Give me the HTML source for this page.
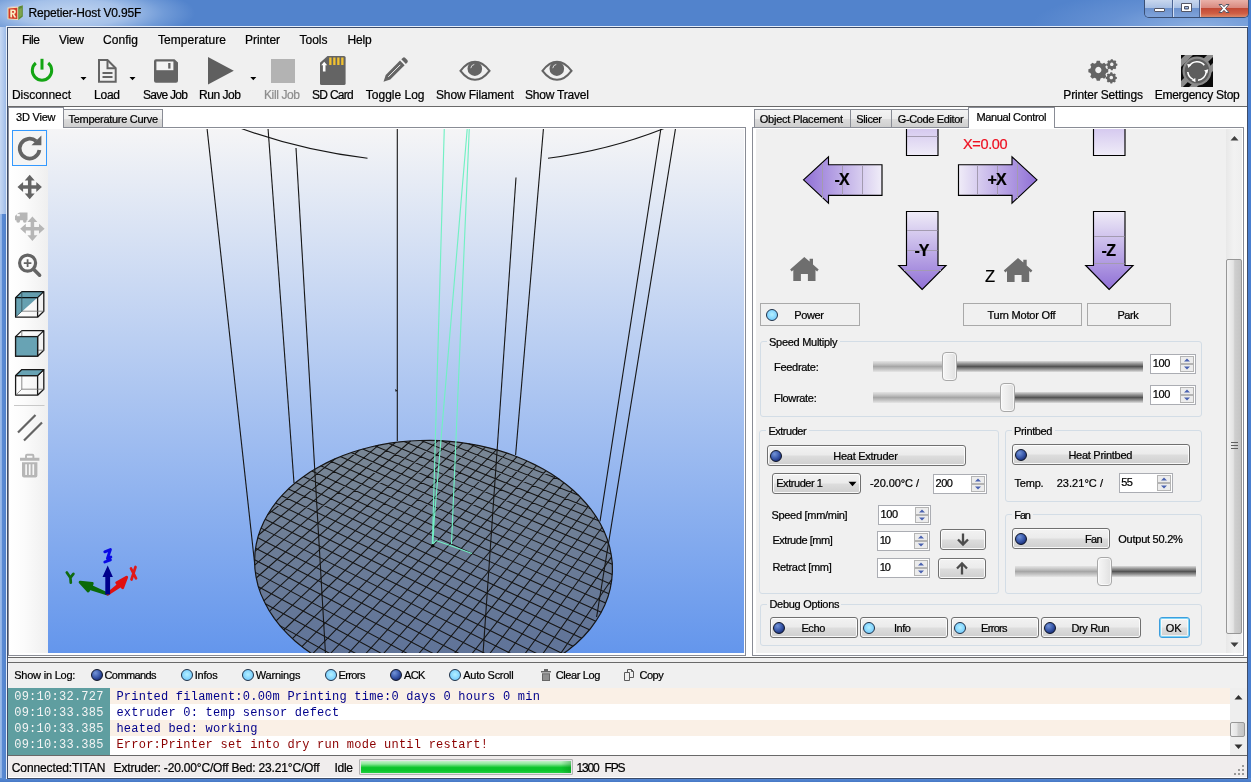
<!DOCTYPE html>
<html><head><meta charset="utf-8"><title>Repetier-Host V0.95F</title>
<style>
*{box-sizing:border-box;margin:0;padding:0}
html,body{width:1251px;height:782px;overflow:hidden}
body{position:relative;font-family:'Liberation Sans',sans-serif;font-size:11px;color:#000;background:#4f85cf}
.abs{position:absolute}
.t{position:absolute;white-space:pre;-webkit-text-stroke:.22px currentColor}
.m{-webkit-text-stroke:0}
svg{position:absolute;overflow:visible}

.btn{position:absolute;border:1px solid #707070;border-radius:3px;background:linear-gradient(#f2f2f2 0,#ebebeb 48%,#dddddd 52%,#cfcfcf 100%);box-shadow:inset 0 0 0 1px rgba(255,255,255,.85)}
.flat{position:absolute;border:1px solid #a9a9a9;background:#f0f0f0}
.grp{position:absolute;border:1px solid #d3dde6;border-radius:3px}
.num{position:absolute;border:1px solid #abadb3;background:#fff}
.led{position:absolute;width:12px;height:12px;border-radius:50%}
.ledd{background:radial-gradient(circle at 35% 30%,#7393d6 0,#3c5cae 45%,#1b2f78 80%);border:1.5px solid #0c1326}
.ledl{background:radial-gradient(circle at 50% 45%,#b4f0ff 0,#86d6ff 55%,#6cc0f6 100%);border:1.5px solid #1c3048}
.trk{position:absolute;height:11px}
.thumb{position:absolute;width:15px;height:29px;border:1px solid #a8a8a8;border-radius:4px;background:linear-gradient(90deg,#f6f6f6,#ececec 50%,#e0e0e0);box-shadow:inset 0 0 0 1px rgba(255,255,255,.7)}

</style></head><body>
<div class="abs" style="left:0px;top:0px;width:1251px;height:782px;background:#5283cc"></div><div class="abs" style="left:0px;top:0px;width:230px;height:27px;background:radial-gradient(ellipse 125px 30px at 70px 13px,rgba(205,222,245,.9) 0,rgba(185,208,240,.8) 45%,rgba(150,184,230,.45) 75%,rgba(82,131,204,0) 100%)"></div><div class="abs" style="left:1000px;top:0px;width:251px;height:27px;background:radial-gradient(ellipse 170px 40px at 200px 27px,rgba(160,190,232,.75) 0,rgba(130,166,222,.4) 55%,rgba(82,131,204,0) 100%)"></div><div class="abs" style="left:0px;top:27px;width:6px;height:190px;background:linear-gradient(90deg,#c6d8f3,#b4cbee 50%,#9dbbe8)"></div><div class="abs" style="left:0px;top:214px;width:6px;height:568px;background:linear-gradient(90deg,#9fbdea 0,#8fb2e6 25%,#5a8ad3 40%,#5283cc 100%)"></div><div class="abs" style="left:1248px;top:0px;width:3px;height:782px;background:#4a7fcf"></div><div class="abs" style="left:0px;top:778px;width:1251px;height:4px;background:linear-gradient(#5b8dd6,#4678c6)"></div><div class="abs" style="left:6px;top:26px;width:1242px;height:753px;background:#e6eefa"></div><div class="abs" style="left:7px;top:27px;width:1241px;height:752px;background:#3d4c69"></div><div class="abs" style="left:8px;top:28px;width:1239px;height:750px;background:#f0f0f0"></div><svg style="left:7px;top:5px" width="17" height="16" viewBox="0 0 17 16">
<path d="M0.500 2.600 L11.300 1.600 L11.300 15 L0.500 14.300 Z" fill="#f3e2b4"/>
<path d="M1.500 3.500 L10.300 2.700 L10.300 14 L1.500 13.400 Z" fill="#d23a26"/>
<path d="M11.300 1.600 L15.800 0.300 L15.800 11.600 L11.300 15 Z" fill="#5d8a32"/>
<path d="M12.200 4 L14.800 3 L14.800 10.500 L12.200 12.600 Z" fill="#8fae5a" opacity=".7"/>
<path d="M0.500 2.600 L4 1.300 L15.800 0.300 L11.300 1.600 Z" fill="#c9c2e0"/>
<path d="M3.300 12.300 V4.600 H6.600 Q8.900 4.600 8.900 6.800 Q8.900 8.500 7.200 8.900 L9.300 12.500 H7.200 L5.600 9.300 H5.100 V12.400 Z M5.100 7.800 H6.300 Q7.100 7.800 7.100 6.900 Q7.100 6.100 6.300 6.100 H5.100 Z" fill="#fbeec4"/>
</svg><div class="abs" style="left:1144px;top:0px;width:105px;height:18px;border:1px solid #3a4f74;border-top:none;border-radius:0 0 5px 5px;background:#6d93cf;overflow:hidden"><div class="abs" style="left:0;top:0;width:28px;height:17px;background:linear-gradient(#c8d7ee 0,#a9c0e4 45%,#6e93ce 50%,#7fa3da 100%);border-right:1px solid #4a6392"></div><div class="abs" style="left:28px;top:0;width:27px;height:17px;background:linear-gradient(#c8d7ee 0,#a9c0e4 45%,#6e93ce 50%,#7fa3da 100%);border-right:1px solid #4a6392;border-left:1px solid #d4e0f4"></div><div class="abs" style="left:55px;top:0;width:49px;height:17px;background:linear-gradient(#e9b1a9 0,#d98a80 45%,#c24a36 50%,#cf5f45 80%,#dc8a6a 100%);border-left:1px solid #e8c8c8"></div></div><svg style="left:1144px;top:0" width="105" height="19">
<rect x="10.5" y="8.5" width="10" height="3" rx="0.5" fill="#fff" stroke="#535666" stroke-width="1"/>
<path d="M37.500 3.500 h10 v8 h-10 z M40.500 6.500 v2.500 h4 v-2.500 z" fill="#fff" fill-rule="evenodd" stroke="#535666" stroke-width="1"/>
<path d="M75 4.500 h3 l2 2.200 l2 -2.200 h3 l-3.500 4 l3.500 4 h-3 l-2 -2.200 l-2 2.200 h-3 l3.500 -4 z" fill="#fff" stroke="#535666" stroke-width="1"/>
</svg><div class="abs" style="left:8px;top:106px;width:1239px;height:1px;background:#696969"></div><div class="abs" style="left:8px;top:107px;width:1239px;height:550px;background:#fff"></div><svg style="left:0;top:0" width="1251" height="110">
<!-- power -->
<path d="M35.800 63.000 A9.700 9.700 0 1 0 48.200 63.000" fill="none" stroke="#14a514" stroke-width="3"/>
<rect x="40.500" y="58.800" width="3" height="10.800" fill="#14a514"/>
<path d="M80.500 77 h6 l-3 3.300 z M129.500 77 h6 l-3 3.300 z M250.300 77 h6 l-3 3.300 z" fill="#000"/>
<!-- load -->
<path d="M99 60 h8.500 l8.200 8.200 v13.600 h-16.700 z" fill="none" stroke="#646464" stroke-width="2" stroke-linejoin="miter"/>
<path d="M107.500 60 v8.200 h8.200" fill="none" stroke="#646464" stroke-width="2"/>
<path d="M102.500 73 h10 M102.500 77 h10" stroke="#646464" stroke-width="1.800"/>
<!-- save -->
<path d="M156 59.300 h18.500 l3.500 3.200 v18.300 q0 2 -2 2 h-20 q-2 0 -2 -2 v-19.500 q0 -2 2 -2 z" fill="#646464"/>
<rect x="156.400" y="61.500" width="17" height="8.700" fill="#f4f4f4"/>
<rect x="168.200" y="63" width="2.300" height="5.600" fill="#646464"/>
<!-- run -->
<path d="M208 57 L233.800 70.800 L208 84.600 z" fill="#5f5f5f"/>
<!-- kill -->
<rect x="271" y="59" width="24" height="24" fill="#b3b3b3"/>
<!-- sd -->
<path d="M327.500 56 h16.500 q1.600 0 1.600 1.600 v25.800 q0 1.600 -1.600 1.600 h-22.400 q-1.600 0 -1.600 -1.600 v-20.600 z" fill="#646464"/>
<path d="M329.200 57.500 h2.300 v7.500 h-2.300 z M333.200 57.500 h2.300 v7.500 h-2.300 z M337.200 57.500 h2.300 v7.500 h-2.300 z M341.200 57.500 h2.300 v7.500 h-2.300 z" fill="#f2c230"/>
<path d="M324.200 61.700 l3 3.600 h-1.700 v6.300 h-2.600 v-6.300 h-1.700 z" fill="#fff"/>
<!-- pencil -->
<path d="M383.500 81.700 l2.200 -6.800 l14.300 -14.300 l4.600 4.600 l-14.300 14.300 z" fill="#646464"/>
<path d="M401.300 59.300 l1.400 -1.400 q1.300 -1.200 2.600 0 l2 2 q1.200 1.300 0 2.600 l-1.400 1.400 z" fill="#646464"/>
<path d="M388.300 76.800 l12 -12" stroke="#f0f0f0" stroke-width="1"/>
<!-- eyes -->
<g id="eye"><path d="M460.500 70.800 Q467.500 61.800 475 61.800 Q482.500 61.800 489.500 70.800 Q482.500 79.800 475 79.800 Q467.500 79.800 460.500 70.800 z" fill="none" stroke="#646464" stroke-width="2.100"/>
<circle cx="474.800" cy="68.700" r="7.300" fill="#646464"/><path d="M470.800 68.200 a4.200 4.200 0 0 1 3.500 -3.800" fill="none" stroke="#d8d8d8" stroke-width="1"/></g>
<use href="#eye" x="82"/>
<!-- gears -->
<g fill="#646464">
<path id="gear" d="M0 -10 l1.700 0 l.7 2.300 l1.900 .8 l2.100 -1.100 l2.400 2.400 l-1.100 2.100 l.8 1.900 l2.300 .7 v3.400 l-2.300 .7 l-.8 1.900 l1.100 2.100 l-2.400 2.400 l-2.100 -1.100 l-1.900 .8 l-.7 2.300 h-3.400 l-.7 -2.300 l-1.900 -.8 l-2.100 1.100 l-2.400 -2.400 l1.100 -2.100 l-.8 -1.900 l-2.300 -.7 v-3.400 l2.300 -.7 l.8 -1.900 l-1.100 -2.100 l2.400 -2.400 l2.100 1.100 l1.900 -.8 l.7 -2.300 z M0 -3.400 a3.400 3.400 0 1 0 0.010 0 z" transform="translate(1098.300 70) scale(.92)" fill-rule="evenodd"/>
<use href="#gear" transform="translate(1111.800 64.300) scale(.56) translate(-1098.300 -70)"/><use href="#gear" transform="translate(1111.300 77.500) scale(.56) translate(-1098.300 -70)"/>
</g>
</svg><svg style="left:1181px;top:55px" width="32" height="32" viewBox="0 0 32 32">
<defs><clipPath id="esc"><rect width="32" height="32"/></clipPath></defs>
<rect width="32" height="32" fill="#0a0a0a"/>
<g clip-path="url(#esc)" stroke="#8c8c8c" stroke-width="5.500"><path d="M-6 14 L14 -6 M6 38 L38 6 M-6 36 L36 -6" /></g>
<circle cx="16" cy="16" r="14.500" fill="#8a8a8a"/><circle cx="16" cy="16" r="12.300" fill="#5d5d5d"/>
<g fill="none" stroke="#fff" stroke-width="1.600"><path d="M8.300 11 A9.300 9.300 0 0 1 23.300 10.200"/><path d="M25.300 16.800 A9.300 9.300 0 0 1 17 25.200"/><path d="M12 24.400 A9.300 9.300 0 0 1 6.800 17"/></g>
<path d="M6.200 9 l4.200 .6 l-3 3.400 z M27.300 14.300 l-1 4.300 l-3.300 -3 z M14.500 27.300 l-3.900 -2 l3.700 -2.400 z" fill="#fff"/>
</svg><div class="abs" style="left:8px;top:127px;width:738px;height:529px;border:1px solid #898c95;background:#fff"></div><div class="abs" style="left:752px;top:127px;width:492px;height:529px;border:1px solid #898c95;background:#fff"></div><div class="abs" style="left:756px;top:129px;width:485px;height:524px;background:#f0f0f0"></div><div class="abs" style="left:63px;top:109px;width:100px;height:18px;border:1px solid #898c95;border-bottom:none;background:linear-gradient(#f3f3f3 0,#ececec 50%,#dddddd 51%,#cfcfcf 100%)"></div><div class="abs" style="left:8px;top:107px;width:56px;height:21px;border:1px solid #898c95;border-bottom:none;background:#fff"></div><div class="abs" style="left:754px;top:109px;width:97px;height:18px;border:1px solid #898c95;border-bottom:none;background:linear-gradient(#f3f3f3 0,#ececec 50%,#dddddd 51%,#cfcfcf 100%)"></div><div class="abs" style="left:850px;top:109px;width:42px;height:18px;border:1px solid #898c95;border-bottom:none;background:linear-gradient(#f3f3f3 0,#ececec 50%,#dddddd 51%,#cfcfcf 100%)"></div><div class="abs" style="left:891px;top:109px;width:78px;height:18px;border:1px solid #898c95;border-bottom:none;background:linear-gradient(#f3f3f3 0,#ececec 50%,#dddddd 51%,#cfcfcf 100%)"></div><div class="abs" style="left:968px;top:107px;width:87px;height:21px;border:1px solid #898c95;border-bottom:none;background:#fff"></div><div class="abs" style="left:8px;top:657px;width:1239px;height:1px;background:#696969"></div><div class="abs" style="left:8px;top:662px;width:1239px;height:1px;background:#696969"></div><div class="abs" style="left:8px;top:663px;width:1239px;height:25px;background:#f0f0f0"></div><div class="abs" style="left:9px;top:129px;width:39px;height:524px;background:linear-gradient(90deg,#ffffff 0,#fbfbfb 40%,#efefef 100%)"></div><div class="abs" style="left:12px;top:130px;width:35px;height:36px;border:1px solid #3399ff;background:#f4f4f4"></div><svg style="left:0;top:0" width="60" height="500">
<!-- rotate -->
<path d="M39.400 150 A9.900 9.900 0 1 1 36.200 141.200" fill="none" stroke="#646464" stroke-width="3.700"/>
<path d="M41.400 135.600 v9.600 h-9.900 z" fill="#646464"/>
<!-- move -->
<g id="mv"><path d="M29.700 174.800 l5 5.600 h-3.250 v4.850 h4.850 v-3.250 l5.600 5 l-5.600 5 v-3.250 h-4.850 v4.850 h3.250 l-5 5.600 l-5 -5.600 h3.250 v-4.850 h-4.850 v3.250 l-5.600 -5 l5.600 -5 v3.250 h4.850 v-4.850 h-3.250 z" fill="#646464"/></g>
<path transform="translate(2.700 41.700)" fill="#b6b6b6" d="M29.700 174.800 l5 5.600 h-3.250 v4.850 h4.850 v-3.250 l5.600 5 l-5.600 5 v-3.250 h-4.850 v4.850 h3.250 l-5 5.600 l-5 -5.600 h3.250 v-4.850 h-4.850 v3.250 l-5.600 -5 l5.600 -5 v3.250 h4.850 v-4.850 h-3.250 z"/>
<g fill="#b6b6b6"><path d="M15 216.600 q0 -1 1 -1.600 l2.500 -2 q.6 -.5 1.400 -.5 h7.600 v7.800 h-12.500 z"/><circle cx="18.200" cy="220.800" r="1.900"/><circle cx="24.800" cy="220.800" r="1.900"/><rect x="16.800" y="214" width="3" height="2.200" fill="#f6f6f6"/></g>
<!-- zoom -->
<circle cx="27.600" cy="263.100" r="8" fill="none" stroke="#646464" stroke-width="3.200"/>
<path d="M33.600 269.200 l6 6" stroke="#646464" stroke-width="3.600" stroke-linecap="round"/>
<path d="M23.800 263.100 h7.600 M27.600 259.300 v7.600" stroke="#646464" stroke-width="1.800"/>
<!-- cubes -->
<g id="cube" fill="none" stroke="#1a1a1a" stroke-width="1.300" stroke-linejoin="round">
<path d="M15.600 297.600 h22 v19.600 h-22 z M15.600 297.600 l6.200 -6 h22 l-6.200 6 M43.800 291.600 v19.600 l-6.200 6"/>
<path d="M21.800 291.600 v19.600 h22 M21.800 311.200 l-6.200 6" stroke="#707070" stroke-width=".8"/></g>
<path d="M15.600 297.600 l6.200 -6 h22 l-6.200 6 l-22 19.600 z" fill="#68a3b4" style="mix-blend-mode:multiply"/>
<use href="#cube" y="39"/><rect x="15.600" y="336.600" width="22" height="19.600" fill="#68a3b4" stroke="#1a1a1a" stroke-width="1.300"/>
<use href="#cube" y="78"/><path d="M15.600 375.600 l6.200 -6 h22 l-6.200 6 z" fill="#68a3b4" stroke="#1a1a1a" stroke-width="1.300" stroke-linejoin="round"/>
<path d="M14 405.500 h30.500" stroke="#c8c8c8" stroke-width="1"/>
<path d="M18 432.500 L35.500 415 M24 440.500 L42 422.500" stroke="#646464" stroke-width="2.200"/>
<!-- trash -->
<path d="M20 457.800 h19.400 v3 h-19.400 z" fill="#b6b6b6"/><path d="M26 458 v-2.300 q0 -1 1 -1 h5.400 q1 0 1 1 v2.300" fill="none" stroke="#b6b6b6" stroke-width="1.900"/>
<path d="M22 462.200 h15.400 v13.400 q0 2 -2 2 h-11.400 q-2 0 -2 -2 z" fill="#b6b6b6"/><path d="M26.100 464.300 v10.600 M29.700 464.300 v10.600 M33.300 464.300 v10.600" stroke="#f7f7f7" stroke-width="1.700"/>
</svg><svg style="left:48px;top:129px;overflow:hidden" width="696" height="524" viewBox="48 129 696 524"><defs><linearGradient id="bg" x1="0" y1="0" x2="0" y2="1"><stop offset="0" stop-color="#f5f5f6"/><stop offset="1" stop-color="#6496ec"/></linearGradient><linearGradient id="bedg" gradientUnits="userSpaceOnUse" x1="0" y1="440" x2="0" y2="660"><stop offset="0" stop-color="#7a8794"/><stop offset="1" stop-color="#5f7399"/></linearGradient></defs><rect x="48" y="129" width="696" height="524" fill="url(#bg)"/><line x1="207" y1="128" x2="254.8" y2="565" stroke="#161616" stroke-width="1.100"/><line x1="268" y1="128" x2="294" y2="483" stroke="#161616" stroke-width="1.100"/><line x1="397.3" y1="128" x2="397.3" y2="441" stroke="#161616" stroke-width="1.100"/><line x1="543.5" y1="128" x2="515.6" y2="455" stroke="#161616" stroke-width="1.100"/><line x1="661" y1="128" x2="600" y2="521.4" stroke="#161616" stroke-width="1.100"/><path d="M240 128 Q300 150 367.500 158.300" fill="none" stroke="#161616" stroke-width="1.100"/><path d="M548 158.300 Q610 150 664 128.500" fill="none" stroke="#161616" stroke-width="1.100"/><path d="M395 389 l2.300 1.400 l-1.500 1.600 z" fill="#161616"/><polygon points="595.8,621.2 590.1,629.0 583.5,636.5 576.0,643.7 567.7,650.5 558.7,657.0 548.9,663.0 538.4,668.5 527.2,673.4 515.5,677.8 503.2,681.5 490.5,684.5 477.4,686.9 464.1,688.6 450.5,689.6 436.9,689.8 423.2,689.3 409.6,688.1 396.1,686.2 382.9,683.6 370.1,680.2 357.6,676.3 345.7,671.7 334.3,666.6 323.5,660.9 313.3,654.8 304.0,648.2 295.3,641.2 287.5,633.9 280.5,626.3 274.3,618.4 268.9,610.3 264.5,602.1 260.8,593.9 258.0,585.5 256.1,577.1 254.9,568.8 254.6,560.6 255.0,552.4 256.2,544.4 258.1,536.5 260.7,528.9 264.0,521.5 267.9,514.3 272.4,507.3 277.4,500.7 283.0,494.3 289.1,488.3 295.7,482.5 302.7,477.2 310.1,472.1 317.9,467.4 326.0,463.1 334.4,459.1 343.1,455.5 352.1,452.3 361.2,449.5 370.6,447.0 380.2,444.9 389.9,443.2 399.7,441.9 409.6,441.0 419.5,440.5 429.5,440.4 439.6,440.7 449.6,441.3 459.5,442.4 469.4,443.8 479.2,445.6 488.9,447.8 498.5,450.4 507.9,453.4 517.0,456.7 526.0,460.5 534.7,464.6 543.1,469.0 551.2,473.8 558.9,479.0 566.3,484.5 573.2,490.3 579.7,496.5 585.7,503.0 591.2,509.7 596.1,516.7 600.5,524.0 604.2,531.5 607.3,539.3 609.7,547.2 611.3,555.3 612.3,563.4 612.4,571.7 611.7,580.1 610.3,588.4 608.0,596.8 604.8,605.0 600.7,613.2" fill="url(#bedg)" stroke="#161616" stroke-width="1.200"/><path d="M517.0 456.7L323.5 660.9M295.7 482.5L595.8 621.2M527.0 460.9L335.5 667.2M288.4 488.9L589.4 629.8M506.8 453.0L312.3 654.1M303.5 476.6L601.2 612.3M536.7 465.5L348.4 672.8M281.7 495.7L581.8 638.2M496.3 449.8L301.9 646.6M311.8 471.0L605.6 603.1M546.0 470.7L362.0 677.8M275.6 503.0L573.1 646.2M485.5 447.0L292.4 638.6M320.7 465.8L608.9 593.8M555.2 476.4L376.6 682.0M270.0 510.8L563.2 653.9M474.3 444.6L283.8 630.0M330.2 461.0L611.1 584.2M564.0 482.7L391.9 685.4M265.2 519.2L552.0 661.1M462.7 442.8L276.1 620.9M340.3 456.6L612.3 574.4M572.5 489.7L408.2 687.9M261.0 528.1L539.5 667.9M450.6 441.4L269.5 611.2M351.1 452.6L612.3 564.3M580.7 497.5L425.3 689.5M257.8 537.8L525.4 674.1M438.0 440.6L263.8 600.8M362.7 449.0L611.1 554.0M588.4 506.2L443.5 689.8M255.6 548.3L509.6 679.6M424.7 440.4L259.4 589.8M375.2 446.0L608.6 543.3M595.7 516.0L462.7 688.8M254.6 559.7L491.8 684.3M410.6 441.0L256.2 578.0M388.9 443.4L604.6 532.3M602.2 527.3L483.2 686.0M255.3 572.4L471.6 687.8M395.4 442.5L254.7 565.2M404.0 441.5L598.7 520.8M607.7 540.5L505.2 680.9M258.4 586.8L448.3 689.7M378.6 445.2L255.2 551.1M421.1 440.5L590.4 508.6M611.6 556.9L529.5 672.5M265.3 603.8L420.5 689.1M359.4 450.0L258.6 535.0M441.5 440.8L578.5 495.3M611.8 579.3L557.9 657.5M279.9 625.6L384.1 683.8M335.1 458.8L267.5 514.9M468.6 443.7L559.6 479.5" stroke="#151515" stroke-width="1.050" fill="none"/><line x1="296" y1="148" x2="325.5" y2="654" stroke="#161616" stroke-width="1.100"/><line x1="516" y1="177.5" x2="483" y2="654" stroke="#161616" stroke-width="1.100"/><line x1="675.6" y1="128" x2="596.6" y2="617" stroke="#161616" stroke-width="1.100"/><path d="M444.300 128 L432.300 546 M467.300 128 L434.200 520 L432.800 545 M469.300 128 L451.500 544 M436 540.500 L453 546.500 L472 553.500 M436 540.500 l-2.500 3" stroke="#72f0c4" stroke-width="1.150" fill="none"/><circle cx="432.700" cy="545.800" r="1.700" fill="#0a0a0a"/><path d="M107.700 594 L91 586.300 l1.200 -2.800 l-12 -1.300 l8 8.700 l1.200 -2.700 z" fill="#0a6a0a" stroke="#0a6a0a" stroke-width="3" stroke-linejoin="round"/><path d="M107.700 594 L118.500 585 l-1.700 -2.300 l9.800 -5.400 l-4 10.400 l-1.700 -2.200 z" fill="#e01010" stroke="#e01010" stroke-width="3" stroke-linejoin="round"/><path d="M105.300 594.500 V577 h-2.800 l5.200 -11.600 l5.200 11.600 h-2.800 V594.500 z" fill="#00008c"/><path d="M104.800 551.800 l5.600 -2.200 l-3 8.800 l3.400 -1.400 M104.800 562 l5.600 -2.200" stroke="#0a0ae6" stroke-width="2.900" fill="none" stroke-linecap="round" stroke-linejoin="round"/><path d="M66.800 572.500 l3.600 5.200 l3 -3.800 M70.400 577.700 l.4 5" stroke="#106a10" stroke-width="2.700" fill="none" stroke-linecap="round"/><path d="M131 568.500 l5 9.800 M135.500 567 l-4 12.500" stroke="#e01818" stroke-width="2.700" fill="none" stroke-linecap="round"/></svg><svg style="left:0;top:0" width="1251" height="300">
<defs>
<linearGradient id="gxl" gradientUnits="userSpaceOnUse" x1="803" y1="0" x2="882" y2="0"><stop offset="0" stop-color="#8f6fd6"/><stop offset="1" stop-color="#f0edf8"/></linearGradient>
<linearGradient id="gxr" gradientUnits="userSpaceOnUse" x1="958" y1="0" x2="1037" y2="0"><stop offset="0" stop-color="#f0edf8"/><stop offset="1" stop-color="#8f6fd6"/></linearGradient>
<linearGradient id="gyd" gradientUnits="userSpaceOnUse" x1="0" y1="211" x2="0" y2="290"><stop offset="0" stop-color="#f0edf8"/><stop offset="1" stop-color="#8f6fd6"/></linearGradient>
<linearGradient id="gtail" gradientUnits="userSpaceOnUse" x1="0" y1="100" x2="0" y2="156"><stop offset="0" stop-color="#b9a4e6"/><stop offset="1" stop-color="#f0edf8"/></linearGradient>
<clipPath id="pc"><rect x="756" y="129" width="470" height="524"/></clipPath>
</defs>
<g clip-path="url(#pc)" stroke="#000" stroke-width="1.150" stroke-linejoin="miter">
<path d="M906.500 120 h31.500 v35.500 h-31.500 z" fill="url(#gtail)"/>
<path d="M1093.500 120 h31.500 v35.500 h-31.500 z" fill="url(#gtail)"/>
<path d="M803.500 179.800 L828.500 156.800 V164.700 H882 V195.300 H828.500 V203.200 Z" fill="url(#gxl)"/>
<path d="M1037 179.800 L1012 156.800 V164.700 H958.500 V195.300 H1012 V203.200 Z" fill="url(#gxr)"/>
<path d="M922.200 289.500 L898.700 265.500 H906.500 V211.500 H938 V265.500 H946 Z" fill="url(#gyd)"/>
<path d="M1109.200 289.500 L1085.700 265.500 H1093.500 V211.500 H1125 V265.500 H1133 Z" fill="url(#gyd)"/>
</g>
<g stroke="#a39bb0" stroke-width="1" clip-path="url(#pc)">
<path d="M907 136.500 h30.500 M822.500 163 v35 M842.500 166 v29 M862.500 166 v29 M977.500 166 v29 M997.500 166 v29 M1017.500 163 v35"/>
<path d="M907 230.500 h30.500 M907 250.500 h30.500 M904 270.500 h37 M1094 236.500 h30.500 M1094 263.500 h30.500"/>
</g>
<g fill="#6e6e6e">
<path id="home" d="M804.300 257 l5.300 4.600 v-2.800 h3.400 v5.800 l5.700 5 l-1.600 1.800 l-1.600 -1.400 v11 h-7.600 v-7 h-7 v7 h-7.600 v-11 l-1.600 1.400 l-1.600 -1.800 z" transform="translate(0 0)"/>
<use href="#home" x="213.700" y="1"/>
</g>
</svg><div class="flat" style="left:760px;top:303px;width:100px;height:23px"></div><div class="led ledl" style="left:766px;top:309px"></div><div class="flat" style="left:963px;top:303px;width:119px;height:23px"></div><div class="flat" style="left:1087px;top:303px;width:84px;height:23px"></div><div class="grp" style="left:760px;top:341px;width:442px;height:76px"></div><div class="abs" style="left:767px;top:340px;width:72.5px;height:3px;background:#f0f0f0"></div><div class="grp" style="left:759px;top:430px;width:240px;height:164px"></div><div class="abs" style="left:766.4px;top:429px;width:42.200000000000045px;height:3px;background:#f0f0f0"></div><div class="grp" style="left:1005px;top:430px;width:197px;height:72px"></div><div class="abs" style="left:1012px;top:429px;width:42.5px;height:3px;background:#f0f0f0"></div><div class="grp" style="left:1005px;top:514px;width:197px;height:80px"></div><div class="abs" style="left:1012.3px;top:513px;width:20.700000000000045px;height:3px;background:#f0f0f0"></div><div class="grp" style="left:760px;top:604px;width:442px;height:42px"></div><div class="abs" style="left:767.4px;top:603px;width:74.10000000000002px;height:3px;background:#f0f0f0"></div><div class="trk" style="left:873px;top:360.5px;width:73px;background:linear-gradient(#e4e4e4 0,#c8c8c8 25%,#a6a6a6 50%,#c4c4c4 75%,#e6e6e6 100%)"></div><div class="trk" style="left:950px;top:360.5px;width:193.29999999999995px;background:linear-gradient(#dadada 0,#949494 25%,#545454 50%,#949494 75%,#dedede 100%)"></div><div class="thumb" style="left:942px;top:351.5px"></div><div class="trk" style="left:873px;top:391.5px;width:131px;background:linear-gradient(#e4e4e4 0,#c8c8c8 25%,#a6a6a6 50%,#c4c4c4 75%,#e6e6e6 100%)"></div><div class="trk" style="left:1008px;top:391.5px;width:135.29999999999995px;background:linear-gradient(#dadada 0,#949494 25%,#545454 50%,#949494 75%,#dedede 100%)"></div><div class="thumb" style="left:1000px;top:382.5px"></div><div class="trk" style="left:1015.3px;top:565.5px;width:85.70000000000005px;background:linear-gradient(#e4e4e4 0,#c8c8c8 25%,#a6a6a6 50%,#c4c4c4 75%,#e6e6e6 100%)"></div><div class="trk" style="left:1105px;top:565.5px;width:90.59999999999991px;background:linear-gradient(#dadada 0,#949494 25%,#545454 50%,#949494 75%,#dedede 100%)"></div><div class="thumb" style="left:1097px;top:556.5px"></div><div class="num" style="left:1150px;top:354px;width:46px;height:20px"></div><svg style="left:1180px;top:356px" width="14" height="16" viewBox="0 0 14 16" preserveAspectRatio="none">
<rect x=".5" y=".5" width="13" height="7" fill="#ececec" stroke="#b4b4b4"/><rect x=".5" y="8.500" width="13" height="7" fill="#ececec" stroke="#b4b4b4"/>
<path d="M4 5.500 l3 -3 l3 3 z M4 10.500 l3 3 l3 -3 z" fill="#4a62b0"/></svg><div class="num" style="left:1150px;top:385px;width:46px;height:20px"></div><svg style="left:1180px;top:387px" width="14" height="16" viewBox="0 0 14 16" preserveAspectRatio="none">
<rect x=".5" y=".5" width="13" height="7" fill="#ececec" stroke="#b4b4b4"/><rect x=".5" y="8.500" width="13" height="7" fill="#ececec" stroke="#b4b4b4"/>
<path d="M4 5.500 l3 -3 l3 3 z M4 10.500 l3 3 l3 -3 z" fill="#4a62b0"/></svg><div class="num" style="left:933px;top:474px;width:54px;height:20px"></div><svg style="left:971px;top:476px" width="14" height="16" viewBox="0 0 14 16" preserveAspectRatio="none">
<rect x=".5" y=".5" width="13" height="7" fill="#ececec" stroke="#b4b4b4"/><rect x=".5" y="8.500" width="13" height="7" fill="#ececec" stroke="#b4b4b4"/>
<path d="M4 5.500 l3 -3 l3 3 z M4 10.500 l3 3 l3 -3 z" fill="#4a62b0"/></svg><div class="num" style="left:1119px;top:473px;width:54px;height:20px"></div><svg style="left:1157px;top:475px" width="14" height="16" viewBox="0 0 14 16" preserveAspectRatio="none">
<rect x=".5" y=".5" width="13" height="7" fill="#ececec" stroke="#b4b4b4"/><rect x=".5" y="8.500" width="13" height="7" fill="#ececec" stroke="#b4b4b4"/>
<path d="M4 5.500 l3 -3 l3 3 z M4 10.500 l3 3 l3 -3 z" fill="#4a62b0"/></svg><div class="num" style="left:878px;top:505px;width:53px;height:20px"></div><svg style="left:915px;top:507px" width="14" height="16" viewBox="0 0 14 16" preserveAspectRatio="none">
<rect x=".5" y=".5" width="13" height="7" fill="#ececec" stroke="#b4b4b4"/><rect x=".5" y="8.500" width="13" height="7" fill="#ececec" stroke="#b4b4b4"/>
<path d="M4 5.500 l3 -3 l3 3 z M4 10.500 l3 3 l3 -3 z" fill="#4a62b0"/></svg><div class="num" style="left:877px;top:531px;width:53px;height:20px"></div><svg style="left:914px;top:533px" width="14" height="16" viewBox="0 0 14 16" preserveAspectRatio="none">
<rect x=".5" y=".5" width="13" height="7" fill="#ececec" stroke="#b4b4b4"/><rect x=".5" y="8.500" width="13" height="7" fill="#ececec" stroke="#b4b4b4"/>
<path d="M4 5.500 l3 -3 l3 3 z M4 10.500 l3 3 l3 -3 z" fill="#4a62b0"/></svg><div class="num" style="left:877px;top:558px;width:53px;height:20px"></div><svg style="left:914px;top:560px" width="14" height="16" viewBox="0 0 14 16" preserveAspectRatio="none">
<rect x=".5" y=".5" width="13" height="7" fill="#ececec" stroke="#b4b4b4"/><rect x=".5" y="8.500" width="13" height="7" fill="#ececec" stroke="#b4b4b4"/>
<path d="M4 5.500 l3 -3 l3 3 z M4 10.500 l3 3 l3 -3 z" fill="#4a62b0"/></svg><div class="btn" style="left:767px;top:445px;width:199px;height:21px;"></div><div class="led ledd" style="left:770px;top:449.5px"></div><div class="btn" style="left:1012px;top:444px;width:178px;height:21px;"></div><div class="led ledd" style="left:1015px;top:448.5px"></div><div class="btn" style="left:772px;top:473px;width:89px;height:21px;"></div><svg style="left:848px;top:481px" width="9" height="6"><path d="M.5 .8 h8 l-4 4.400 z" fill="#000"/></svg><div class="btn" style="left:940px;top:529px;width:46px;height:21px;"></div><div class="btn" style="left:938px;top:558px;width:48px;height:21px;"></div><svg style="left:940px;top:529px" width="50" height="52"><g stroke="#4c4c4c" stroke-width="2.300" fill="none"><path d="M23 4.500 v10.500 M18 10.500 l5 5 l5 -5"/><path d="M23 45.500 v-10.500 M18 39.500 l5 -5 l5 5" transform="translate(-1 0)"/></g></svg><div class="btn" style="left:1012px;top:528px;width:98px;height:21px;"></div><div class="led ledd" style="left:1015px;top:532.5px"></div><div class="btn" style="left:770px;top:617px;width:88px;height:21px;"></div><div class="led ledd" style="left:773px;top:621.5px"></div><div class="btn" style="left:860px;top:617px;width:88px;height:21px;"></div><div class="led ledl" style="left:863px;top:621.5px"></div><div class="btn" style="left:951px;top:617px;width:88px;height:21px;"></div><div class="led ledl" style="left:954px;top:621.5px"></div><div class="btn" style="left:1041px;top:617px;width:100px;height:21px;"></div><div class="led ledd" style="left:1044px;top:621.5px"></div><div class="btn" style="left:1159px;top:617px;width:31px;height:21px;border-color:#3c9ede;box-shadow:inset 0 0 0 1px #7fd4f6,inset 0 0 0 2px rgba(255,255,255,.7)"></div><div class="abs" style="left:1226px;top:129px;width:16px;height:524px;background:linear-gradient(90deg,#e8e8e8,#f2f2f2 50%,#eeeeee)"></div><div class="abs" style="left:1226px;top:259px;width:16px;height:375px;border:1px solid #979797;border-radius:2px;background:linear-gradient(90deg,#f2f2f2 0,#e4e4e4 45%,#cfcfcf 55%,#c4c4c4 100%)"></div><svg style="left:1226px;top:129px" width="17" height="524"><path d="M4.500 11.500 l4 -4.500 l4 4.500 z M4.500 513.500 l4 4.500 l4 -4.500 z" fill="#404040"/><path d="M5 313.500 h7 M5 316.500 h7 M5 319.500 h7" stroke="#606060" stroke-width="1"/></svg><div class="led ledd" style="left:91px;top:669px"></div><div class="led ledl" style="left:181px;top:669px"></div><div class="led ledl" style="left:242px;top:669px"></div><div class="led ledl" style="left:325px;top:669px"></div><div class="led ledd" style="left:390px;top:669px"></div><div class="led ledl" style="left:449px;top:669px"></div><svg style="left:540px;top:668px" width="100" height="14">
<path d="M1 3 h10 v1.600 h-10 z M4 1 h4 v2 h-4 z M2 5.300 h8 v7.700 h-8 z" fill="#666"/><path d="M4 6.300 v5.700 M6 6.300 v5.700 M8 6.300 v5.700" stroke="#d0d0d0" stroke-width=".8"/>
<g fill="none" stroke="#5a5a5a" stroke-width="1"><path d=""/>
<path d="M84.500 4.500 h5 v8 h-5 z M87.500 4 v-2.500 h4 l2 2 v6 h-3.500 M91.500 1.500 v2 h2"/></g></svg><div class="abs" style="left:8px;top:688px;width:1222px;height:67px;background:#fff"></div><div class="abs" style="left:8px;top:688px;width:102px;height:67px;background:#5f9ea0"></div><div class="abs" style="left:110px;top:688px;width:1120px;height:16px;background:#faf0e6"></div><div class="abs" style="left:110px;top:704px;width:1120px;height:16px;background:#ffffff"></div><div class="abs" style="left:110px;top:720px;width:1120px;height:16px;background:#faf0e6"></div><div class="abs" style="left:110px;top:736px;width:1120px;height:16px;background:#ffffff"></div><div class="abs" style="left:1230px;top:688px;width:17px;height:67px;background:#eeeeee"></div><div class="abs" style="left:1230px;top:722px;width:15px;height:15px;border:1px solid #979797;border-radius:2px;background:linear-gradient(90deg,#f2f2f2 0,#e4e4e4 45%,#cfcfcf 55%,#c4c4c4 100%)"></div><svg style="left:1230px;top:688px" width="17" height="67"><path d="M4.500 11.500 l4 -4.500 l4 4.500 z M4.500 56.500 l4 4.500 l4 -4.500 z" fill="#303030"/></svg><div class="abs" style="left:8px;top:755px;width:1239px;height:1px;background:#696969"></div><div class="abs" style="left:8px;top:756px;width:1239px;height:21px;background:#f0eded"></div><div class="abs" style="left:8px;top:777px;width:1239px;height:1px;background:#ffffff"></div><div class="abs" style="left:359px;top:759px;width:214px;height:16px;border:1px solid #b2b2b2;background:#e6e6e6;border-radius:1px"><div class="abs" style="left:1px;top:1px;width:210px;height:12px;background:linear-gradient(#c4f2c8 0,#8ee89a 25%,#3ed455 42%,#0cc42a 55%,#0bc52b 80%,#22cf42 100%)"></div><div class="abs" style="left:201px;top:1px;width:10px;height:12px;background:linear-gradient(90deg,rgba(0,120,20,0),rgba(0,120,20,.35))"></div></div><svg style="left:1233px;top:764px" width="13" height="13"><g fill="#9a9a9a"><rect x="9" y="1" width="2" height="2"/><rect x="5" y="5" width="2" height="2"/><rect x="9" y="5" width="2" height="2"/><rect x="1" y="9" width="2" height="2"/><rect x="5" y="9" width="2" height="2"/><rect x="9" y="9" width="2" height="2"/></g></svg>
<span class="t" style="left:28.60px;top:7px;font-family:'Liberation Sans',sans-serif;font-size:12px;line-height:13.404px;color:#000;font-weight:normal;letter-spacing:-0.177px">Repetier-Host V0.95F</span><span class="t" style="left:22.00px;top:34px;font-family:'Liberation Sans',sans-serif;font-size:12px;line-height:13.404px;color:#000;font-weight:normal;letter-spacing:-0.448px">File</span><span class="t" style="left:59.00px;top:34px;font-family:'Liberation Sans',sans-serif;font-size:12px;line-height:13.404px;color:#000;font-weight:normal;letter-spacing:-0.266px">View</span><span class="t" style="left:103.00px;top:34px;font-family:'Liberation Sans',sans-serif;font-size:12px;line-height:13.404px;color:#000;font-weight:normal;letter-spacing:0.062px">Config</span><span class="t" style="left:158.00px;top:34px;font-family:'Liberation Sans',sans-serif;font-size:12px;line-height:13.404px;color:#000;font-weight:normal;letter-spacing:0.062px">Temperature</span><span class="t" style="left:245.00px;top:34px;font-family:'Liberation Sans',sans-serif;font-size:12px;line-height:13.404px;color:#000;font-weight:normal;letter-spacing:-0.057px">Printer</span><span class="t" style="left:299.50px;top:34px;font-family:'Liberation Sans',sans-serif;font-size:12px;line-height:13.404px;color:#000;font-weight:normal;letter-spacing:-0.004px">Tools</span><span class="t" style="left:347.50px;top:34px;font-family:'Liberation Sans',sans-serif;font-size:12px;line-height:13.404px;color:#000;font-weight:normal;letter-spacing:-0.129px">Help</span><span class="t" style="left:12.00px;top:89px;font-family:'Liberation Sans',sans-serif;font-size:12px;line-height:13.404px;color:#000;font-weight:normal;letter-spacing:-0.042px">Disconnect</span><span class="t" style="left:94.00px;top:89px;font-family:'Liberation Sans',sans-serif;font-size:12px;line-height:13.404px;color:#000;font-weight:normal;letter-spacing:-0.234px">Load</span><span class="t" style="left:143.00px;top:89px;font-family:'Liberation Sans',sans-serif;font-size:12px;line-height:13.404px;color:#000;font-weight:normal;letter-spacing:-0.721px">Save Job</span><span class="t" style="left:199.00px;top:89px;font-family:'Liberation Sans',sans-serif;font-size:12px;line-height:13.404px;color:#000;font-weight:normal;letter-spacing:-0.451px">Run Job</span><span class="t" style="left:264.00px;top:89px;font-family:'Liberation Sans',sans-serif;font-size:12px;line-height:13.404px;color:#8d8d8d;font-weight:normal;letter-spacing:-0.384px">Kill Job</span><span class="t" style="left:312.00px;top:89px;font-family:'Liberation Sans',sans-serif;font-size:12px;line-height:13.404px;color:#000;font-weight:normal;letter-spacing:-0.703px">SD Card</span><span class="t" style="left:365.80px;top:89px;font-family:'Liberation Sans',sans-serif;font-size:12px;line-height:13.404px;color:#000;font-weight:normal;letter-spacing:-0.002px">Toggle Log</span><span class="t" style="left:436.00px;top:89px;font-family:'Liberation Sans',sans-serif;font-size:12px;line-height:13.404px;color:#000;font-weight:normal;letter-spacing:-0.131px">Show Filament</span><span class="t" style="left:525.00px;top:89px;font-family:'Liberation Sans',sans-serif;font-size:12px;line-height:13.404px;color:#000;font-weight:normal;letter-spacing:-0.223px">Show Travel</span><span class="t" style="left:1063.30px;top:89px;font-family:'Liberation Sans',sans-serif;font-size:12px;line-height:13.404px;color:#000;font-weight:normal;letter-spacing:-0.163px">Printer Settings</span><span class="t" style="left:1154.70px;top:89px;font-family:'Liberation Sans',sans-serif;font-size:12px;line-height:13.404px;color:#000;font-weight:normal;letter-spacing:-0.278px">Emergency Stop</span><span class="t" style="left:16.00px;top:111px;font-family:'Liberation Sans',sans-serif;font-size:11px;line-height:12.287px;color:#000;font-weight:normal;letter-spacing:-0.211px">3D View</span><span class="t" style="left:68.50px;top:113px;font-family:'Liberation Sans',sans-serif;font-size:11px;line-height:12.287px;color:#000;font-weight:normal;letter-spacing:-0.291px">Temperature Curve</span><span class="t" style="left:759.80px;top:113px;font-family:'Liberation Sans',sans-serif;font-size:11px;line-height:12.287px;color:#000;font-weight:normal;letter-spacing:-0.242px">Object Placement</span><span class="t" style="left:856.30px;top:113px;font-family:'Liberation Sans',sans-serif;font-size:11px;line-height:12.287px;color:#000;font-weight:normal;letter-spacing:-0.363px">Slicer</span><span class="t" style="left:897.70px;top:113px;font-family:'Liberation Sans',sans-serif;font-size:11px;line-height:12.287px;color:#000;font-weight:normal;letter-spacing:-0.359px">G-Code Editor</span><span class="t" style="left:976.50px;top:111px;font-family:'Liberation Sans',sans-serif;font-size:11px;line-height:12.287px;color:#000;font-weight:normal;letter-spacing:-0.361px">Manual Control</span><span class="t" style="left:963.00px;top:136px;font-family:'Liberation Sans',sans-serif;font-size:14.5px;line-height:16.197px;color:#ee1122;font-weight:normal;letter-spacing:-0.355px">X=0.00</span><span class="t" style="left:834.60px;top:171px;font-family:'Liberation Sans',sans-serif;font-size:16px;line-height:17.872px;color:#000;font-weight:bold;letter-spacing:-0.800px">-X</span><span class="t" style="left:987.40px;top:171px;font-family:'Liberation Sans',sans-serif;font-size:16px;line-height:17.872px;color:#000;font-weight:bold;letter-spacing:-0.816px">+X</span><span class="t" style="left:914.50px;top:242px;font-family:'Liberation Sans',sans-serif;font-size:16px;line-height:17.872px;color:#000;font-weight:bold;letter-spacing:-1.000px">-Y</span><span class="t" style="left:1101.60px;top:242px;font-family:'Liberation Sans',sans-serif;font-size:16px;line-height:17.872px;color:#000;font-weight:bold;letter-spacing:-0.709px">-Z</span><span class="t" style="left:985.00px;top:267px;font-family:'Liberation Sans',sans-serif;font-size:16.5px;line-height:18.430px;color:#000;font-weight:normal;letter-spacing:0.306px">Z</span><span class="t" style="left:794.30px;top:309px;font-family:'Liberation Sans',sans-serif;font-size:11px;line-height:12.287px;color:#000;font-weight:normal;letter-spacing:-0.372px">Power</span><span class="t" style="left:987.40px;top:309px;font-family:'Liberation Sans',sans-serif;font-size:11px;line-height:12.287px;color:#000;font-weight:normal;letter-spacing:-0.209px">Turn Motor Off</span><span class="t" style="left:1117.50px;top:309px;font-family:'Liberation Sans',sans-serif;font-size:11px;line-height:12.287px;color:#000;font-weight:normal;letter-spacing:-0.475px">Park</span><span class="t" style="left:769.00px;top:336px;font-family:'Liberation Sans',sans-serif;font-size:11px;line-height:12.287px;color:#000;font-weight:normal;letter-spacing:-0.281px">Speed Multiply</span><span class="t" style="left:768.40px;top:425px;font-family:'Liberation Sans',sans-serif;font-size:11px;line-height:12.287px;color:#000;font-weight:normal;letter-spacing:-0.483px">Extruder</span><span class="t" style="left:1014.00px;top:425px;font-family:'Liberation Sans',sans-serif;font-size:11px;line-height:12.287px;color:#000;font-weight:normal;letter-spacing:-0.355px">Printbed</span><span class="t" style="left:1014.30px;top:509px;font-family:'Liberation Sans',sans-serif;font-size:11px;line-height:12.287px;color:#000;font-weight:normal;letter-spacing:-1.134px">Fan</span><span class="t" style="left:769.40px;top:598px;font-family:'Liberation Sans',sans-serif;font-size:11px;line-height:12.287px;color:#000;font-weight:normal;letter-spacing:-0.274px">Debug Options</span><span class="t" style="left:774.00px;top:361px;font-family:'Liberation Sans',sans-serif;font-size:11px;line-height:12.287px;color:#000;font-weight:normal;letter-spacing:-0.299px">Feedrate:</span><span class="t" style="left:774.00px;top:392px;font-family:'Liberation Sans',sans-serif;font-size:11px;line-height:12.287px;color:#000;font-weight:normal;letter-spacing:-0.319px">Flowrate:</span><span class="t" style="left:1152.80px;top:357px;font-family:'Liberation Sans',sans-serif;font-size:11px;line-height:12.287px;color:#000;font-weight:normal;letter-spacing:-0.430px">100</span><span class="t" style="left:1152.80px;top:388px;font-family:'Liberation Sans',sans-serif;font-size:11px;line-height:12.287px;color:#000;font-weight:normal;letter-spacing:-0.430px">100</span><span class="t" style="left:935.40px;top:477px;font-family:'Liberation Sans',sans-serif;font-size:11px;line-height:12.287px;color:#000;font-weight:normal;letter-spacing:-0.380px">200</span><span class="t" style="left:1121.30px;top:476px;font-family:'Liberation Sans',sans-serif;font-size:11px;line-height:12.287px;color:#000;font-weight:normal;letter-spacing:-0.750px">55</span><span class="t" style="left:880.50px;top:508px;font-family:'Liberation Sans',sans-serif;font-size:11px;line-height:12.287px;color:#000;font-weight:normal;letter-spacing:-0.430px">100</span><span class="t" style="left:879.80px;top:534px;font-family:'Liberation Sans',sans-serif;font-size:11px;line-height:12.287px;color:#000;font-weight:normal;letter-spacing:-1.050px">10</span><span class="t" style="left:879.80px;top:561px;font-family:'Liberation Sans',sans-serif;font-size:11px;line-height:12.287px;color:#000;font-weight:normal;letter-spacing:-1.050px">10</span><span class="t" style="left:833.30px;top:450px;font-family:'Liberation Sans',sans-serif;font-size:11px;line-height:12.287px;color:#000;font-weight:normal;letter-spacing:-0.281px">Heat Extruder</span><span class="t" style="left:1068.40px;top:449px;font-family:'Liberation Sans',sans-serif;font-size:11px;line-height:12.287px;color:#000;font-weight:normal;letter-spacing:-0.272px">Heat Printbed</span><span class="t" style="left:776.20px;top:477px;font-family:'Liberation Sans',sans-serif;font-size:11px;line-height:12.287px;color:#000;font-weight:normal;letter-spacing:-0.439px">Extruder 1</span><span class="t" style="left:870.00px;top:477px;font-family:'Liberation Sans',sans-serif;font-size:11px;line-height:12.287px;color:#000;font-weight:normal;letter-spacing:-0.073px">-20.00°C /</span><span class="t" style="left:1014.60px;top:477px;font-family:'Liberation Sans',sans-serif;font-size:11px;line-height:12.287px;color:#000;font-weight:normal;letter-spacing:-0.242px">Temp.</span><span class="t" style="left:1056.70px;top:477px;font-family:'Liberation Sans',sans-serif;font-size:11px;line-height:12.287px;color:#000;font-weight:normal;letter-spacing:0.039px">23.21°C /</span><span class="t" style="left:771.40px;top:509px;font-family:'Liberation Sans',sans-serif;font-size:11px;line-height:12.287px;color:#000;font-weight:normal;letter-spacing:-0.292px">Speed [mm/min]</span><span class="t" style="left:772.40px;top:534px;font-family:'Liberation Sans',sans-serif;font-size:11px;line-height:12.287px;color:#000;font-weight:normal;letter-spacing:-0.464px">Extrude [mm]</span><span class="t" style="left:772.40px;top:561px;font-family:'Liberation Sans',sans-serif;font-size:11px;line-height:12.287px;color:#000;font-weight:normal;letter-spacing:-0.332px">Retract [mm]</span><span class="t" style="left:1085.00px;top:533px;font-family:'Liberation Sans',sans-serif;font-size:11px;line-height:12.287px;color:#000;font-weight:normal;letter-spacing:-0.684px">Fan</span><span class="t" style="left:1118.30px;top:533px;font-family:'Liberation Sans',sans-serif;font-size:11px;line-height:12.287px;color:#000;font-weight:normal;letter-spacing:-0.253px">Output 50.2%</span><span class="t" style="left:801.40px;top:622px;font-family:'Liberation Sans',sans-serif;font-size:11px;line-height:12.287px;color:#000;font-weight:normal;letter-spacing:-0.393px">Echo</span><span class="t" style="left:894.00px;top:622px;font-family:'Liberation Sans',sans-serif;font-size:11px;line-height:12.287px;color:#000;font-weight:normal;letter-spacing:-0.453px">Info</span><span class="t" style="left:981.00px;top:622px;font-family:'Liberation Sans',sans-serif;font-size:11px;line-height:12.287px;color:#000;font-weight:normal;letter-spacing:-0.671px">Errors</span><span class="t" style="left:1071.40px;top:622px;font-family:'Liberation Sans',sans-serif;font-size:11px;line-height:12.287px;color:#000;font-weight:normal;letter-spacing:-0.357px">Dry Run</span><span class="t" style="left:1165.70px;top:622px;font-family:'Liberation Sans',sans-serif;font-size:11px;line-height:12.287px;color:#000;font-weight:normal;letter-spacing:-0.006px">OK</span><span class="t" style="left:14.20px;top:669px;font-family:'Liberation Sans',sans-serif;font-size:11px;line-height:12.287px;color:#000;font-weight:normal;letter-spacing:-0.219px">Show in Log:</span><span class="t" style="left:104.50px;top:669px;font-family:'Liberation Sans',sans-serif;font-size:11px;line-height:12.287px;color:#000;font-weight:normal;letter-spacing:-0.593px">Commands</span><span class="t" style="left:194.70px;top:669px;font-family:'Liberation Sans',sans-serif;font-size:11px;line-height:12.287px;color:#000;font-weight:normal;letter-spacing:-0.215px">Infos</span><span class="t" style="left:255.70px;top:669px;font-family:'Liberation Sans',sans-serif;font-size:11px;line-height:12.287px;color:#000;font-weight:normal;letter-spacing:-0.180px">Warnings</span><span class="t" style="left:338.60px;top:669px;font-family:'Liberation Sans',sans-serif;font-size:11px;line-height:12.287px;color:#000;font-weight:normal;letter-spacing:-0.631px">Errors</span><span class="t" style="left:404.00px;top:669px;font-family:'Liberation Sans',sans-serif;font-size:11px;line-height:12.287px;color:#000;font-weight:normal;letter-spacing:-0.662px">ACK</span><span class="t" style="left:463.30px;top:669px;font-family:'Liberation Sans',sans-serif;font-size:11px;line-height:12.287px;color:#000;font-weight:normal;letter-spacing:-0.280px">Auto Scroll</span><span class="t" style="left:555.70px;top:669px;font-family:'Liberation Sans',sans-serif;font-size:11px;line-height:12.287px;color:#000;font-weight:normal;letter-spacing:-0.375px">Clear Log</span><span class="t" style="left:639.60px;top:669px;font-family:'Liberation Sans',sans-serif;font-size:11px;line-height:12.287px;color:#000;font-weight:normal;letter-spacing:-0.529px">Copy</span><span class="t m" style="left:14.20px;top:691px;font-family:'Liberation Mono',monospace;font-size:12px;line-height:13.596px;color:#f4f4f4;font-weight:normal;letter-spacing:0.260px">09:10:32.727</span><span class="t m" style="left:116.40px;top:691px;font-family:'Liberation Mono',monospace;font-size:12px;line-height:13.596px;color:#00008b;font-weight:normal;letter-spacing:0.233px">Printed filament:0.00m Printing time:0 days 0 hours 0 min</span><span class="t m" style="left:14.20px;top:707px;font-family:'Liberation Mono',monospace;font-size:12px;line-height:13.596px;color:#f4f4f4;font-weight:normal;letter-spacing:0.260px">09:10:33.385</span><span class="t m" style="left:116.40px;top:707px;font-family:'Liberation Mono',monospace;font-size:12px;line-height:13.596px;color:#00008b;font-weight:normal;letter-spacing:0.233px">extruder 0: temp sensor defect</span><span class="t m" style="left:14.20px;top:723px;font-family:'Liberation Mono',monospace;font-size:12px;line-height:13.596px;color:#f4f4f4;font-weight:normal;letter-spacing:0.260px">09:10:33.385</span><span class="t m" style="left:116.40px;top:723px;font-family:'Liberation Mono',monospace;font-size:12px;line-height:13.596px;color:#00008b;font-weight:normal;letter-spacing:0.233px">heated bed: working</span><span class="t m" style="left:14.20px;top:739px;font-family:'Liberation Mono',monospace;font-size:12px;line-height:13.596px;color:#f4f4f4;font-weight:normal;letter-spacing:0.260px">09:10:33.385</span><span class="t m" style="left:116.40px;top:739px;font-family:'Liberation Mono',monospace;font-size:12px;line-height:13.596px;color:#8b0000;font-weight:normal;letter-spacing:0.233px">Error:Printer set into dry run mode until restart!</span><span class="t" style="left:11.80px;top:762px;font-family:'Liberation Sans',sans-serif;font-size:12px;line-height:13.404px;color:#000;font-weight:normal;letter-spacing:-0.111px">Connected:TITAN</span><span class="t" style="left:113.60px;top:762px;font-family:'Liberation Sans',sans-serif;font-size:12px;line-height:13.404px;color:#000;font-weight:normal;letter-spacing:-0.177px">Extruder: -20.00°C/Off Bed: 23.21°C/Off</span><span class="t" style="left:334.60px;top:762px;font-family:'Liberation Sans',sans-serif;font-size:12px;line-height:13.404px;color:#000;font-weight:normal;letter-spacing:-0.320px">Idle</span><span class="t" style="left:576.50px;top:762px;font-family:'Liberation Sans',sans-serif;font-size:12px;line-height:13.404px;color:#000;font-weight:normal;letter-spacing:-1.200px">1300</span><span class="t" style="left:604.60px;top:762px;font-family:'Liberation Sans',sans-serif;font-size:12px;line-height:13.404px;color:#000;font-weight:normal;letter-spacing:-1.200px">FPS</span>
</body></html>
